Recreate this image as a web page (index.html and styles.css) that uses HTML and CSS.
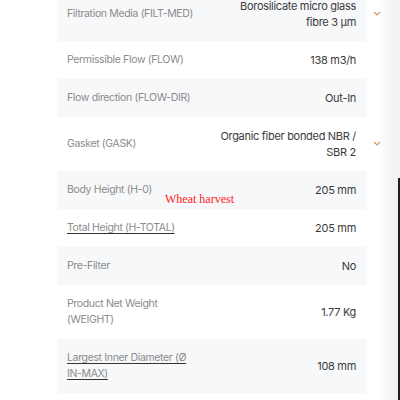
FILE: index.html
```html
<!DOCTYPE html>
<html>
<head>
<meta charset="utf-8">
<link rel="stylesheet" href="styles.css">
</head>
<body>
<div class="page">
  <div class="specs">
    <div class="row alt">
      <div class="label">Filtration Media (FILT-MED)</div>
      <div class="value">Borosilicate micro glass fibre 3 µm</div>
      <svg class="chev" viewBox="0 0 8 5" width="8" height="5"><path d="M1 1 L4 4 L7 1" fill="none" stroke="#c99a66" stroke-width="1.2"/></svg>
    </div>
    <div class="row">
      <div class="label">Permissible Flow (FLOW)</div>
      <div class="value">138 m3/h</div>
    </div>
    <div class="row alt">
      <div class="label">Flow direction (FLOW-DIR)</div>
      <div class="value">Out-In</div>
    </div>
    <div class="row">
      <div class="label">Gasket (GASK)</div>
      <div class="value">Organic fiber bonded NBR / SBR 2</div>
      <svg class="chev" viewBox="0 0 8 5" width="8" height="5"><path d="M1 1 L4 4 L7 1" fill="none" stroke="#c99a66" stroke-width="1.2"/></svg>
    </div>
    <div class="row alt">
      <div class="label">Body Height (H-0)</div>
      <div class="value">205 mm</div>
    </div>
    <div class="row">
      <div class="label link">Total Height (H-TOTAL)</div>
      <div class="value">205 mm</div>
    </div>
    <div class="row alt">
      <div class="label">Pre-Filter</div>
      <div class="value">No</div>
    </div>
    <div class="row">
      <div class="label">Product Net Weight (WEIGHT)</div>
      <div class="value">1.77 Kg</div>
    </div>
    <div class="row alt">
      <div class="label link">Largest Inner Diameter (Ø IN-MAX)</div>
      <div class="value">108 mm</div>
    </div>
  </div>
  <div class="side"></div>
</div>
<div class="note">Wheat harvest</div>
</body>
</html>
```
FILE: styles.css
```css
html, body {
  margin: 0;
  padding: 0;
  background: #ffffff;
  overflow: hidden;
}
.page {
  display: flex;
  height: 400px;
  overflow: hidden;
}
.specs {
  width: 310px;
  margin-left: 57px;
  margin-top: -13px;
  font-family: Inter, "Noto Sans", sans-serif;
  font-size: 10.5px;
  letter-spacing: -0.35px;
}
.row {
  position: relative;
  display: flex;
  justify-content: space-between;
  align-items: center;
  padding: 11px 11px 11px 10px;
  line-height: 16px;
}
.row.alt {
  background: #f7f8fa;
}
.label {
  width: 134px;
  color: #8b8b8b;
}
.label.link {
  text-decoration: underline;
  text-decoration-color: #333;
  text-underline-offset: 2px;
}
.value {
  width: 137px;
  text-align: right;
  color: #3b3b3b;
  font-size: 11px;
  letter-spacing: -0.3px;
}
.chev {
  position: absolute;
  z-index: 2;
  right: -14px;
  top: 50%;
  margin-top: -3px;
}
.side {
  flex: 1;
  margin-left: 10px;
  background: linear-gradient(to right, #ffffff 0%, #f3f4f6 60%, #f0f1f3 100%);
  position: relative;
}
.side::after {
  content: "";
  position: absolute;
  right: 0;
  top: 178px;
  bottom: 0;
  width: 2px;
  background: #1e1e1e;
}
.note {
  position: absolute;
  z-index: 3;
  left: 165px;
  top: 192px;
  font-family: "Liberation Serif", serif;
  font-size: 12px;
  color: #ff1a1a;
}
```
